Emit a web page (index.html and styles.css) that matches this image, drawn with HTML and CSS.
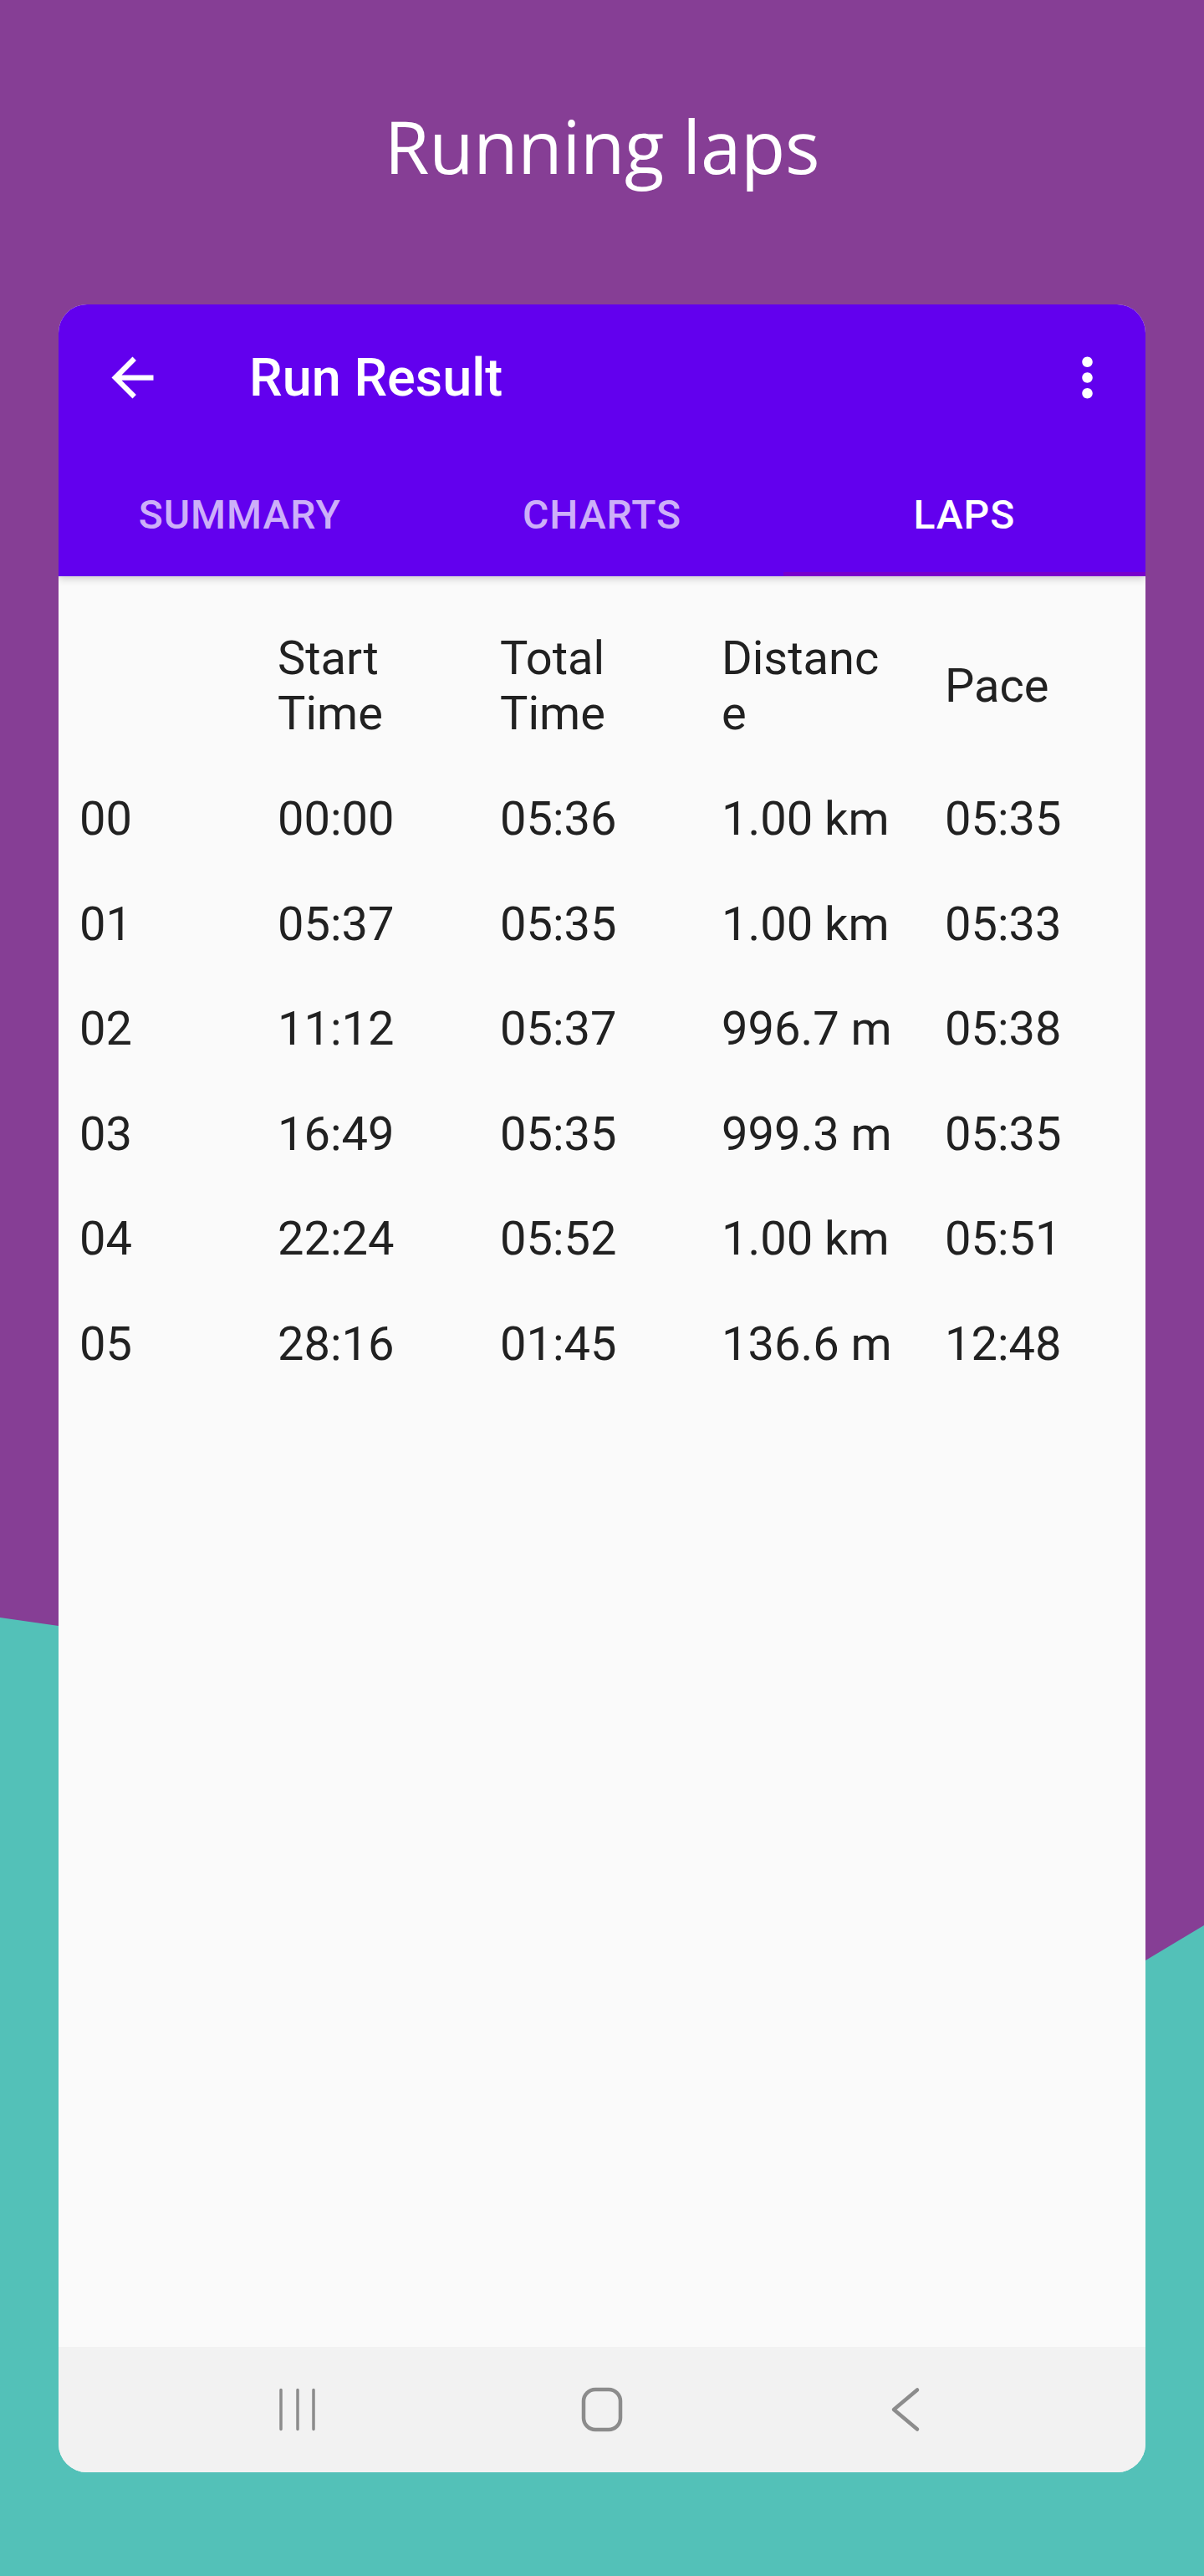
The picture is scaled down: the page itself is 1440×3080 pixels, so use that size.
FILE: index.html
```html
<!DOCTYPE html>
<html lang="en">
<head>
    <meta charset="UTF-8">
    <meta name="viewport" content="width=device-width, initial-scale=1.0">
    <title>Running laps</title>
    <link rel="stylesheet" href="styles.css">
</head>
<body>

    <svg class="backdrop" width="1440" height="3080" viewBox="0 0 1440 3080" aria-hidden="true">
        <rect width="1440" height="3080" fill="#863e95"/>
        <path d="M0 1934 L70 1944 C500 2010 900 2500 1370 2344 L1440 2302 V3080 H0 Z" fill="#53c1b8"/>
    </svg>

    <div class="page">
        <h1 class="page-title">Running laps</h1>

        <div class="phone">
            <div class="app-bar">
                <div class="toolbar">
                    <svg class="toolbar-icon" viewBox="0 0 24 24">
                        <path d="M20 11H7.83l5.59-5.59L12 4l-8 8 8 8 1.41-1.41L7.83 13H20v-2z" fill="#fff"/>
                    </svg>
                    <span class="toolbar-title">Run Result</span>
                    <svg class="toolbar-icon" viewBox="0 0 24 24">
                        <path d="M12 8c1.1 0 2-.9 2-2s-.9-2-2-2-2 .9-2 2 .9 2 2 2zm0 2c-1.1 0-2 .9-2 2s.9 2 2 2 2-.9 2-2-.9-2-2-2zm0 6c-1.1 0-2 .9-2 2s.9 2 2 2 2-.9 2-2-.9-2-2-2z" fill="#fff"/>
                    </svg>
                </div>
                <div class="tabs">
                    <div class="tab">SUMMARY</div>
                    <div class="tab">CHARTS</div>
                    <div class="tab active">LAPS</div>
                </div>
            </div>

            <div class="laps">
                <div class="laps-row laps-head">
                    <div></div>
                    <div>Start Time</div>
                    <div>Total Time</div>
                    <div>Distance</div>
                    <div>Pace</div>
                </div>
                <div class="laps-row">
                    <div>00</div><div>00:00</div><div>05:36</div><div>1.00 km</div><div>05:35</div>
                </div>
                <div class="laps-row">
                    <div>01</div><div>05:37</div><div>05:35</div><div>1.00 km</div><div>05:33</div>
                </div>
                <div class="laps-row">
                    <div>02</div><div>11:12</div><div>05:37</div><div>996.7 m</div><div>05:38</div>
                </div>
                <div class="laps-row">
                    <div>03</div><div>16:49</div><div>05:35</div><div>999.3 m</div><div>05:35</div>
                </div>
                <div class="laps-row">
                    <div>04</div><div>22:24</div><div>05:52</div><div>1.00 km</div><div>05:51</div>
                </div>
                <div class="laps-row">
                    <div>05</div><div>28:16</div><div>01:45</div><div>136.6 m</div><div>12:48</div>
                </div>
            </div>

            <div class="nav-bar">
                <svg class="nav-icon" viewBox="0 0 60 60">
                    <path d="M10 6.5V53.5M30 6.5V53.5M49 6.5V53.5" stroke="#8c8c8c" stroke-width="3.5" stroke-linecap="round" fill="none"/>
                </svg>
                <svg class="nav-icon" viewBox="0 0 60 60">
                    <rect x="8" y="6" width="44" height="48" rx="14" stroke="#8c8c8c" stroke-width="4.5" fill="none"/>
                </svg>
                <svg class="nav-icon" viewBox="0 0 60 60">
                    <path d="M44 6.5L16 30L44 53.5" stroke="#8c8c8c" stroke-width="4.5" stroke-linecap="round" stroke-linejoin="round" fill="none"/>
                </svg>
            </div>
        </div>
    </div>

</body>
</html>
```

FILE: styles.css
```css
body {
    margin: 0;
    width: 1440px;
    height: 3080px;
    position: relative;
    overflow: hidden;
    font-family: Roboto, "Noto Sans", sans-serif;
}

.backdrop {
    position: absolute;
    top: 0;
    left: 0;
    z-index: 0;
}

.page {
    position: relative;
    z-index: 1;
    padding-top: 130px;
}

.page-title {
    margin: 0;
    text-align: center;
    color: #fff;
    font-family: "Open Sans", sans-serif;
    font-weight: 400;
    font-size: 87px;
    line-height: 88px;
    letter-spacing: -0.3px;
}

.phone {
    margin: 146px 70px 0;
    height: 2592px;
    border-radius: 34px;
    overflow: hidden;
    background-color: #fafafa;
    display: flex;
    flex-direction: column;
}

.app-bar {
    position: relative;
    z-index: 1;
    background-color: #6200ee;
    box-shadow: 0 3px 9px rgba(0, 0, 0, 0.18);
}

.toolbar {
    height: 175px;
    display: flex;
    align-items: center;
    padding: 0 32px 0 51px;
}

.toolbar-icon {
    width: 75px;
    height: 75px;
    flex-shrink: 0;
}

.toolbar-title {
    flex: 1;
    margin-left: 102px;
    color: #fff;
    font-size: 63px;
    font-weight: 500;
}

.tabs {
    height: 150px;
    display: grid;
    grid-template-columns: 1fr 1fr 1fr;
}

.tab {
    display: flex;
    align-items: center;
    justify-content: center;
    padding-top: 2px;
    color: rgba(255, 255, 255, 0.7);
    font-size: 48px;
    font-weight: 500;
    letter-spacing: 1px;
}

.tab.active {
    color: #fff;
    box-shadow: inset 0 -5px 0 #7800cc;
}

.laps {
    flex: 1;
    padding-left: 25px;
    color: #212121;
    font-size: 56px;
}

.laps-row {
    display: grid;
    grid-template-columns: 237px 266px 265px 267px 1fr;
    align-items: center;
    padding: 30px 0;
    line-height: 65.5px;
}

.laps-head {
    padding: 65px 0 31px;
    line-height: 66px;
}

.laps-head div {
    max-width: 204px;
    overflow-wrap: anywhere;
}

.nav-bar {
    height: 150px;
    background-color: #f2f2f2;
    display: flex;
    align-items: center;
    justify-content: space-between;
    padding: 0 257px 0 256px;
}

.nav-icon {
    width: 60px;
    height: 60px;
}
```
